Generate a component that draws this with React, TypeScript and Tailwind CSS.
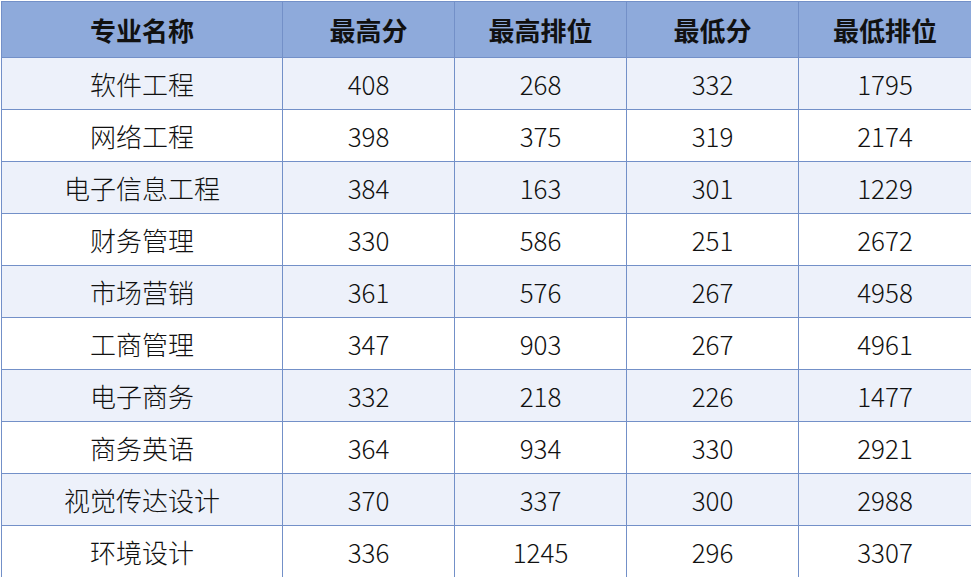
const headers = ["专业名称", "最高分", "最高排位", "最低分", "最低排位"];

const rows: [string, number, number, number, number][] = [
  ["软件工程", 408, 268, 332, 1795],
  ["网络工程", 398, 375, 319, 2174],
  ["电子信息工程", 384, 163, 301, 1229],
  ["财务管理", 330, 586, 251, 2672],
  ["市场营销", 361, 576, 267, 4958],
  ["工商管理", 347, 903, 267, 4961],
  ["电子商务", 332, 218, 226, 1477],
  ["商务英语", 364, 934, 330, 2921],
  ["视觉传达设计", 370, 337, 300, 2988],
  ["环境设计", 336, 1245, 296, 3307],
];

const App = () => {
  return (
    <div
      className="w-[971px] h-[577px] bg-white pl-px pt-px"
      style={{ fontFamily: '"Noto Sans CJK SC", "Noto Sans", sans-serif' }}
    >
      <table className="table-fixed border-collapse w-[970px] text-[26px] text-[#111]">
        <colgroup>
          <col className="w-[281px]" />
          <col className="w-[172px]" />
          <col className="w-[172px]" />
          <col className="w-[172px]" />
          <col className="w-[173px]" />
        </colgroup>
        <thead>
          <tr className="h-[56px] bg-[#8eaadb]">
            {headers.map((h) => (
              <th
                key={h}
                className="border border-[#7390c8] font-bold text-center p-0 leading-none"
              >
                {h}
              </th>
            ))}
          </tr>
        </thead>
        <tbody>
          {rows.map((r, i) => (
            <tr
              key={r[0]}
              className={`h-[52px] ${i % 2 === 0 ? "bg-[#edf1fa]" : "bg-white"}`}
            >
              {r.map((c, j) => (
                <td
                  key={j}
                  className="border border-[#7390c8] text-center p-0 leading-none font-light"
                >
                  {c}
                </td>
              ))}
            </tr>
          ))}
        </tbody>
      </table>
    </div>
  );
};

export default App;
